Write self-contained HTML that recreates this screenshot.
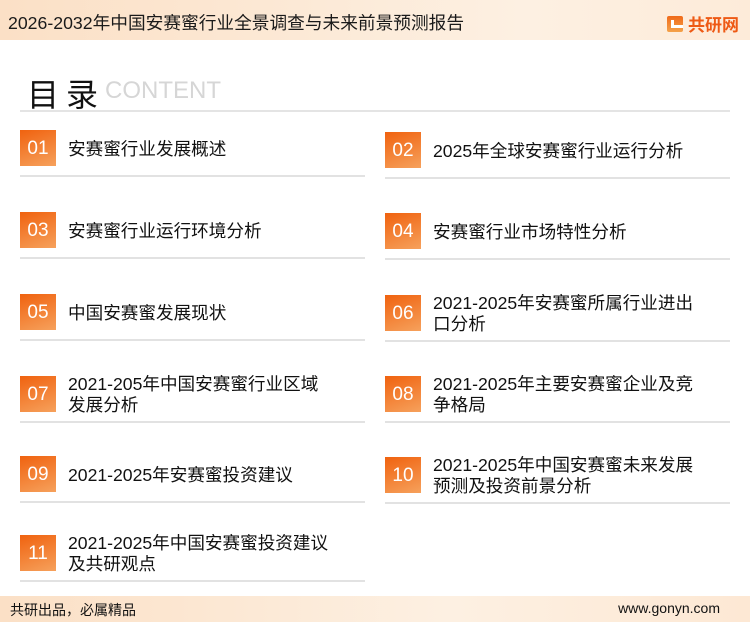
<!DOCTYPE html>
<html><head><meta charset="utf-8"><style>
*{margin:0;padding:0;box-sizing:border-box}
body{width:750px;height:622px;position:relative;background:#fff;font-family:"Liberation Sans","Noto Sans CJK SC",sans-serif;overflow:hidden;color:#111}
.hd{position:absolute;left:0;top:0;width:750px;height:40px;background:linear-gradient(90deg,#fbe0c6,#fdf0e2 70%,#fdebd9)}
.hd .t{position:absolute;left:8px;top:9px;font-size:17.7px;color:#1a1a1a;white-space:nowrap}
.logo{position:absolute;left:667px;top:11px;font-size:17px;font-weight:bold;color:#ee5a15;display:flex;align-items:center}
.logo i{display:inline-block;width:16px;height:16px;background:linear-gradient(180deg,#f06a1a,#f4a24a);border-radius:2px;margin-right:5px;position:relative}
.logo i:after{content:"";position:absolute;left:4px;top:4px;width:9px;height:5px;border-left:3px solid #fff;border-bottom:3px solid #fff}
.mu{position:absolute;left:27px;top:70px;font-size:32px;letter-spacing:7px;color:#111}
.ct{position:absolute;left:105px;top:77px;font-size:24px;color:#d6d6d6}
.ln{position:absolute;left:20px;top:110px;width:710px;height:2px;background:#e4e4e4}
.it{position:absolute;width:345px;height:46px}
.it b{position:absolute;left:0;top:0;width:36px;height:36px;background:linear-gradient(160deg,#f0620f,#f6a15c);color:#fff;font-weight:normal;font-size:19px;line-height:38px;text-align:center}
.it span{position:absolute;left:48px;top:1px;height:36px;display:flex;align-items:center;font-size:17.6px;line-height:21px;white-space:nowrap}
.it:after{content:"";position:absolute;left:0;top:45px;width:345px;height:2px;background:#e2e2e2}
.ft{position:absolute;left:0;top:596px;width:750px;height:26px;background:linear-gradient(90deg,#fbe0c6,#fdf0e2 60%,#fde8d4)}
.ft .a{position:absolute;left:10px;top:4px;font-size:14px}
.ft .b{position:absolute;right:30px;top:4px;font-size:14px}
</style></head><body>
<div class="hd"><div class="t">2026-2032年中国安赛蜜行业全景调查与未来前景预测报告</div>
<div class="logo"><i></i>共研网</div></div>
<div class="mu">目录</div><div class="ct">CONTENT</div>
<div class="ln"></div>
<div class="it" style="left:20px;top:130px"><b>01</b><span>安赛蜜行业发展概述</span></div>
<div class="it" style="left:385px;top:132px"><b>02</b><span>2025年全球安赛蜜行业运行分析</span></div>
<div class="it" style="left:20px;top:212px"><b>03</b><span>安赛蜜行业运行环境分析</span></div>
<div class="it" style="left:385px;top:213px"><b>04</b><span>安赛蜜行业市场特性分析</span></div>
<div class="it" style="left:20px;top:294px"><b>05</b><span>中国安赛蜜发展现状</span></div>
<div class="it" style="left:385px;top:295px"><b>06</b><span>2021-2025年安赛蜜所属行业进出<br>口分析</span></div>
<div class="it" style="left:20px;top:376px"><b>07</b><span>2021-205年中国安赛蜜行业区域<br>发展分析</span></div>
<div class="it" style="left:385px;top:376px"><b>08</b><span>2021-2025年主要安赛蜜企业及竞<br>争格局</span></div>
<div class="it" style="left:20px;top:456px"><b>09</b><span>2021-2025年安赛蜜投资建议</span></div>
<div class="it" style="left:385px;top:457px"><b>10</b><span>2021-2025年中国安赛蜜未来发展<br>预测及投资前景分析</span></div>
<div class="it" style="left:20px;top:535px"><b>11</b><span>2021-2025年中国安赛蜜投资建议<br>及共研观点</span></div>
<div class="ft"><div class="a">共研出品，必属精品</div><div class="b">www.gonyn.com</div></div>
</body></html>
